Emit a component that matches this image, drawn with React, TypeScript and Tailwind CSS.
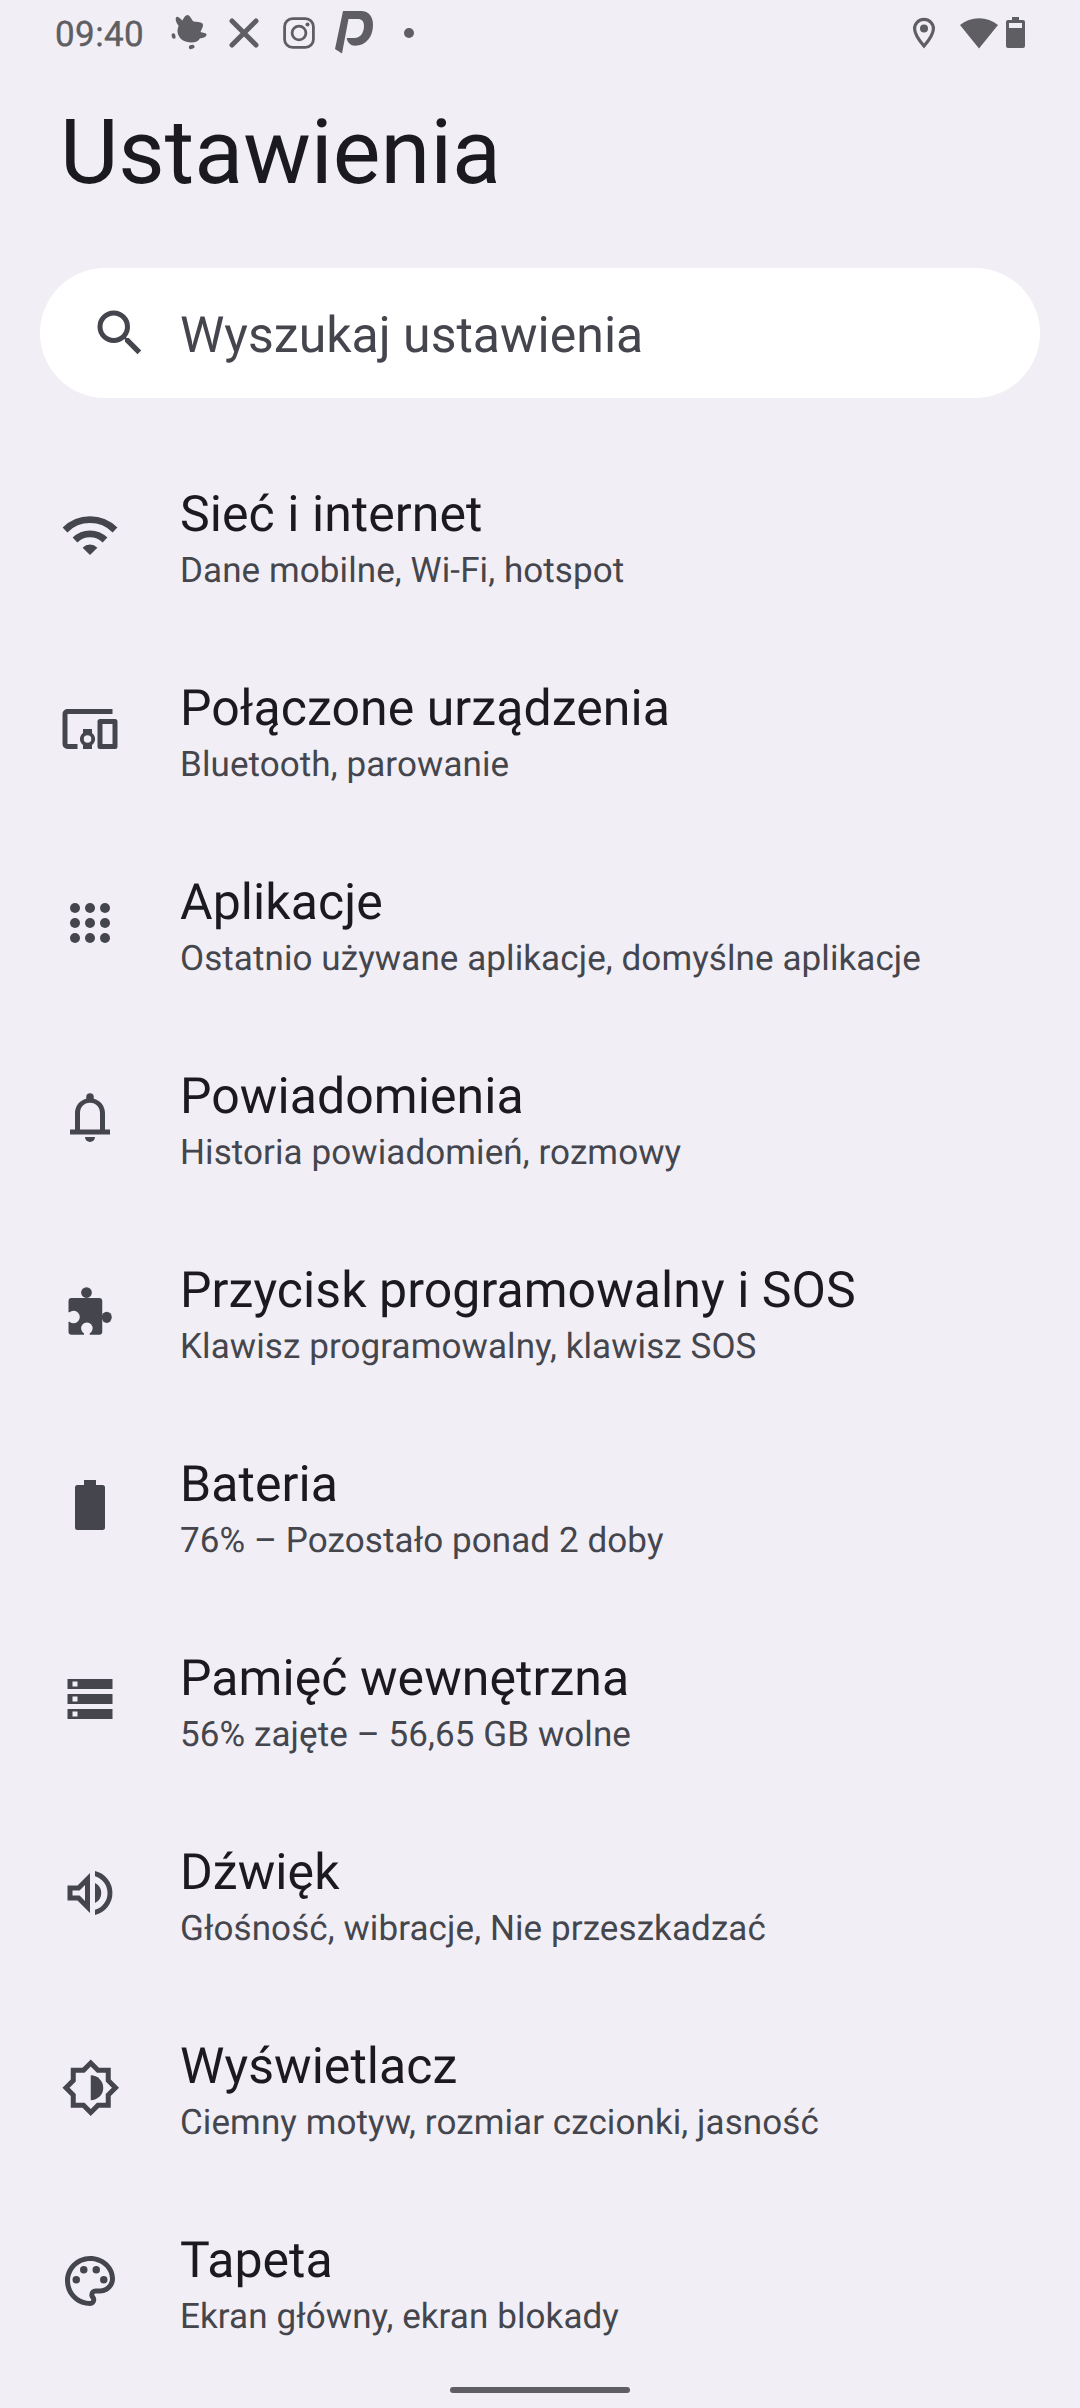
import React from "react";

type Item = {
  title: string;
  summary: string;
  icon: React.ReactNode;
};

const items: Item[] = [
  {
    title: "Sieć i internet",
    summary: "Dane mobilne, Wi-Fi, hotspot",
    icon: (
      <>
        <g fill="none" stroke="currentColor" strokeWidth="2.7">
          <path d="M2 10a14.15 14.15 0 0 1 20 0" />
          <path d="M6 14a8.5 8.5 0 0 1 12 0" />
        </g>
        <path d="M12 20l-2.95-2.95a4.17 4.17 0 0 1 5.9 0z" />
      </>
    ),
  },
  {
    title: "Połączone urządzenia",
    summary: "Bluetooth, parowanie",
    icon: (
      <>
        <path d="M21 4H3a2 2 0 0 0-2 2v12a2 2 0 0 0 2 2h4v-2H3V6h18z" />
        <path
          fillRule="evenodd"
          d="M22 8h-6a1 1 0 0 0-1 1v10a1 1 0 0 0 1 1h6a1 1 0 0 0 1-1V9a1 1 0 0 0-1-1zm-1 10h-4v-8h4z"
        />
        <path
          fillRule="evenodd"
          d="M12.8 12H9.2v1.6a2.95 2.95 0 0 0 0 4.8V20h3.6v-1.6a2.95 2.95 0 0 0 0-4.8zM11 17.5a1.5 1.5 0 1 1 0-3 1.5 1.5 0 0 1 0 3z"
        />
      </>
    ),
  },
  {
    title: "Aplikacje",
    summary: "Ostatnio używane aplikacje, domyślne aplikacje",
    icon: (
      <>
        <circle cx="6" cy="6" r="2" />
        <circle cx="12" cy="6" r="2" />
        <circle cx="18" cy="6" r="2" />
        <circle cx="6" cy="12" r="2" />
        <circle cx="12" cy="12" r="2" />
        <circle cx="18" cy="12" r="2" />
        <circle cx="6" cy="18" r="2" />
        <circle cx="12" cy="18" r="2" />
        <circle cx="18" cy="18" r="2" />
      </>
    ),
  },
  {
    title: "Powiadomienia",
    summary: "Historia powiadomień, rozmowy",
    icon: (
      <>
        <path
          fillRule="evenodd"
          d="M18 17v-6.5c0-2.9-1.9-5.2-4.5-5.8V4a1.5 1.5 0 0 0-3 0v.7C7.9 5.3 6 7.6 6 10.5V17H4v2h16v-2zm-2 0H8v-6.5c0-2.4 1.6-4.2 4-4.2s4 1.8 4 4.2z"
        />
        <path d="M10 20h4a2 2 0 0 1-4 0z" />
      </>
    ),
  },
  {
    title: "Przycisk programowalny i SOS",
    summary: "Klawisz programowalny, klawisz SOS",
    icon: (
      <>
        <circle cx="10.6" cy="4.6" r="2.15" />
        <ellipse cx="18.7" cy="14.5" rx="2" ry="2.25" />
        <path d="M4.6 6.8h11.1a1.2 1.2 0 0 1 1.2 1.2v12.3a1.2 1.2 0 0 1-1.2 1.2h-3.8v-.6a2.3 2.3 0 1 0-2.3 0v.6h-5a1.2 1.2 0 0 1-1.2-1.2v-4h.4a2.5 2.5 0 1 0 0-3.8h-.4V8a1.2 1.2 0 0 1 1.2-1.2z" />
      </>
    ),
  },
  {
    title: "Bateria",
    summary: "76% – Pozostało ponad 2 doby",
    icon: <path d="M17 4h-2.6V2H9.6v2H7a1 1 0 0 0-1 1v16a1 1 0 0 0 1 1h10a1 1 0 0 0 1-1V5a1 1 0 0 0-1-1z" />,
  },
  {
    title: "Pamięć wewnętrzna",
    summary: "56% zajęte – 56,65 GB wolne",
    icon: (
      <path
        fillRule="evenodd"
        d="M3 4h18v4H3zM5 5v2h2V5zM3 10h18v4H3zM5 11v2h2v-2zM3 16h18v4H3zM5 17v2h2v-2z"
      />
    ),
  },
  {
    title: "Dźwięk",
    summary: "Głośność, wibracje, Nie przeszkadzać",
    icon: (
      <path
        fillRule="evenodd"
        d="M3 9v6h4l5 5V4L7 9zm7-.17v6.34L7.83 13H5v-2h2.83zM16.5 12A4.5 4.5 0 0 0 14 7.97v8.05A4.47 4.47 0 0 0 16.5 12zM14 3.23v2.06a7 7 0 0 1 0 13.42v2.06a9 9 0 0 0 0-17.54z"
      />
    ),
  },
  {
    title: "Wyświetlacz",
    summary: "Ciemny motyw, rozmiar czcionki, jasność",
    icon: (
      <g transform="translate(.3 .3)">
        <path
          fillRule="evenodd"
          d="M20 8.69V4h-4.69L12 .69 8.69 4H4v4.69L.69 12 4 15.31V20h4.69L12 23.31 15.31 20H20v-4.69L23.31 12zm-2 5.79V18h-3.52L12 20.48 9.52 18H6v-3.52L3.52 12 6 9.52V6h3.52L12 3.52 14.48 6H18v3.52L20.48 12z"
        />
        <path d="M12 7v10a5 5 0 0 0 0-10z" />
      </g>
    ),
  },
  {
    title: "Tapeta",
    summary: "Ekran główny, ekran blokady",
    icon: (
      <>
        <path
          fillRule="evenodd"
          d="M12 22C6.49 22 2 17.51 2 12S6.49 2 12 2s10 4.04 10 9c0 3.31-2.69 6-6 6h-1.77c-.28 0-.5.22-.5.5 0 .12.05.23.13.33.41.47.64 1.06.64 1.67A2.5 2.5 0 0 1 12 22zm0-18c-4.41 0-8 3.59-8 8s3.59 8 8 8c.28 0 .5-.22.5-.5a.54.54 0 0 0-.14-.35c-.41-.46-.63-1.05-.63-1.65a2.5 2.5 0 0 1 2.5-2.5H16c2.21 0 4-1.79 4-4 0-3.86-3.59-7-8-7z"
        />
        <circle cx="6.5" cy="11.5" r="1.5" />
        <circle cx="9.5" cy="7.5" r="1.5" />
        <circle cx="14.5" cy="7.5" r="1.5" />
        <circle cx="17.5" cy="11.5" r="1.5" />
      </>
    ),
  },
];

const StatusBar = () => {
  return (
    <div className="flex h-[66px] items-center justify-between px-[55px] text-[#5f5e62]">
      <div className="flex items-center">
        <span className="w-[116px] pt-0.5 text-[35px] leading-[41px] tracking-[0.4px] [-webkit-text-stroke:0.4px_#5f5e62]">
          09:40
        </span>
        <svg className="h-9 w-9" viewBox="0 0 36 36" fill="currentColor">
          <path d="M5.5 2C7.5 1 9 4 11.5 5.5 12.5 2.5 14.5 0 16.5 0c2.5 0 3.5 4 6 6.5 3 .5 7 .3 9 2 1.5 2-.8 5.5-2 8.5 2 .8 6 .8 6 2.7 0 2-3.5 3.6-6.5 3.6-1.5 3-4.5 4.2-8.5 4.2-7 0-13-3.5-14-10.500C6.2 14 7.500 12 7.500 10.500 5.500 8.500 3.500 3.500 5.500 2z" />
          <ellipse cx="2.6" cy="21" rx="1.9" ry="2.8" transform="rotate(-15 2.6 21)" />
          <rect x="17.8" y="29.9" width="5.8" height="4" rx="2" transform="rotate(-15 20.7 31.9)" />
        </svg>
        <svg className="ml-[22px] h-[30px] w-[30px]" viewBox="0 0 30 30">
          <path d="M3 3l24 24M27 3L3 27" stroke="currentColor" strokeWidth="5" strokeLinecap="round" />
        </svg>
        <svg className="ml-6 h-8 w-8" viewBox="0 0 32 32" fill="none" stroke="currentColor" strokeWidth="2.8">
          <rect x="1.6" y="1.6" width="28.8" height="28.8" rx="8" />
          <circle cx="16" cy="16" r="6.9" />
          <circle cx="24.5" cy="7.5" r="2" fill="currentColor" stroke="none" />
        </svg>
        <svg className="ml-5 h-11 w-[39px]" viewBox="0 0 39 44" fill="currentColor">
          <path d="M8 0h18c8 0 12 6 12 14 0 12-7 20.7-18 20.7-4.5 0-7.5-3-8.3-7.7h8c5.5 0 9.3-5 9.3-12 0-4.5-2-7-6.5-7h-9L7 42.5 0 38z" />
        </svg>
        <span className="ml-[30px] size-2.5 rounded-full bg-[#5f5e62]" />
      </div>
      <div className="flex items-center">
        <svg className="h-8 w-6" viewBox="0 0 24 32">
          <path
            d="M12 2.4c-5.3 0-9.4 4.2-9.4 9.3C2.6 18 12 29 12 29s9.4-11 9.4-17.3c0-5.1-4.1-9.3-9.4-9.3z"
            fill="none"
            stroke="currentColor"
            strokeWidth="3.2"
          />
          <circle cx="12" cy="11.5" r="4" fill="currentColor" />
        </svg>
        <svg className="ml-6 h-8 w-[38px]" viewBox="0 0 38 32" fill="currentColor">
          <path d="M19 31.5L0 8a30 30 0 0 1 38 0z" />
        </svg>
        <svg className="ml-2 h-8 w-[19px]" viewBox="0 0 19 32" fill="currentColor">
          <path
            fillRule="evenodd"
            d="M6 0h7v3h4a2 2 0 0 1 2 2v24a2 2 0 0 1-2 2H2a2 2 0 0 1-2-2V5a2 2 0 0 1 2-2h4zM3 6v5h13V6z"
          />
        </svg>
      </div>
    </div>
  );
};

const SettingsRow = ({ title, summary, icon }: Item) => {
  return (
    <li className="flex h-[194px] items-center pl-[60px]">
      <svg className="size-[60px] shrink-0 text-[#45464d]" viewBox="0 0 24 24" fill="currentColor">
        {icon}
      </svg>
      <div className="ml-[60px] whitespace-nowrap pt-3">
        <p className="text-[50px] leading-[60px] tracking-[0.06px] text-[#1b1a1f]">{title}</p>
        <p className="text-[35px] leading-[52px] tracking-[0.09px] text-[#45464d]">{summary}</p>
      </div>
    </li>
  );
};

const App = () => {
  return (
    <div className="flex h-[2408px] w-[1080px] flex-col overflow-hidden bg-[#f1eff5] font-[Roboto,sans-serif] [text-rendering:geometricPrecision]">
      <StatusBar />
      <h1 className="mt-[34px] pl-[60px] text-[90px] leading-[105px] text-[#1b1a1f]">Ustawienia</h1>
      <div className="mx-10 mt-[63px] flex h-[130px] shrink-0 items-center rounded-full bg-white pl-[50px] text-[#45464d]">
        <svg className="size-[60px]" viewBox="0 0 24 24" fill="currentColor">
          <path d="M15.5 14h-.79l-.28-.27A6.471 6.471 0 0 0 16 9.5 6.5 6.5 0 1 0 9.5 16c1.61 0 3.09-.59 4.23-1.57l.27.28v.79l5 4.99L20.49 19l-4.99-5zm-6 0C7.01 14 5 11.99 5 9.5S7.01 5 9.5 5 14 7.01 14 9.5 11.99 14 9.5 14z" />
        </svg>
        <span className="ml-[30px] pt-[5px] text-[50px] leading-[60px]">Wyszukaj ustawienia</span>
      </div>
      <ul className="mt-10">
        {items.map((item) => (
          <SettingsRow key={item.title} {...item} />
        ))}
      </ul>
      <div className="mx-auto mt-[9px] h-1.5 w-[180px] rounded-full bg-[#5f5e62]" />
    </div>
  );
};

export default App;
